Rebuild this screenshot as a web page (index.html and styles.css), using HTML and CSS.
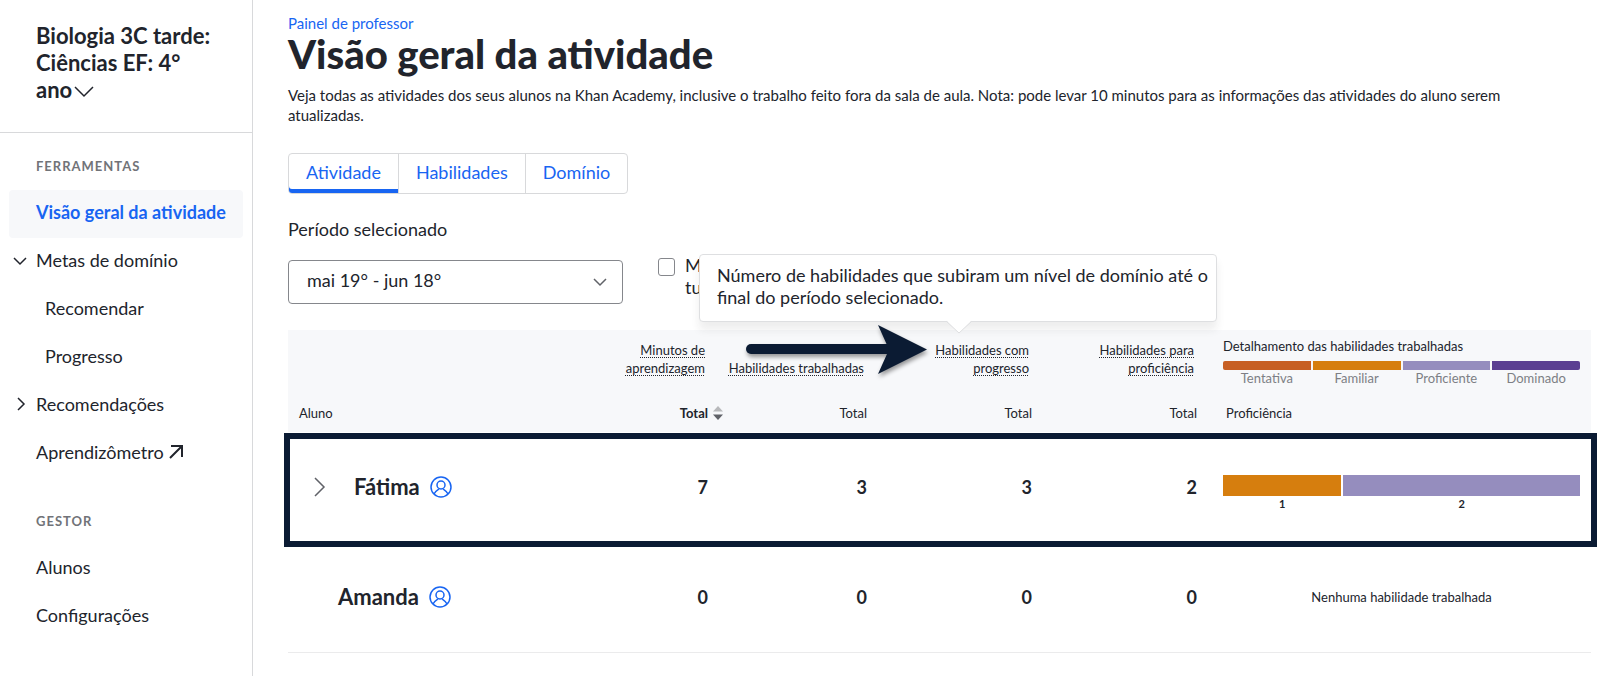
FILE: index.html
```
<!DOCTYPE html>
<html lang="pt-BR">
<head>
    <meta charset="UTF-8">
    <meta name="viewport" content="width=device-width, initial-scale=1.0">
    <title>Visão geral da atividade</title>
    <link rel="stylesheet" href="styles.css">
</head>
<body>
    <div class="layout">
        <!-- Sidebar -->
        <aside class="sidebar">
            <div class="class-header">
                <button class="class-switcher" type="button">Biologia 3C tarde: Ciências EF: 4° ano
                    <svg class="class-chevron" width="20" height="12" viewBox="0 0 20 12" aria-hidden="true"><path d="M1 1l9 9 9-9"/></svg>
                </button>
            </div>
            <nav class="nav">
                <h2 class="nav-title">Ferramentas</h2>
                <ul class="nav-list">
                    <li><a class="nav-link active" href="#">Visão geral da atividade</a></li>
                    <li>
                        <a class="nav-link" href="#">
                            <svg class="nav-chevron" width="14" height="14" viewBox="0 0 14 14" aria-hidden="true"><path d="M1 5l6 6 6-6"/></svg>
                            Metas de domínio
                        </a>
                    </li>
                    <li><a class="nav-link sub" href="#">Recomendar</a></li>
                    <li><a class="nav-link sub" href="#">Progresso</a></li>
                    <li>
                        <a class="nav-link" href="#">
                            <svg class="nav-chevron" width="14" height="14" viewBox="0 0 14 14" aria-hidden="true"><path d="M5 1l6 6-6 6"/></svg>
                            Recomendações
                        </a>
                    </li>
                    <li>
                        <a class="nav-link" href="#">Aprendizômetro
                            <svg class="nav-external" width="14" height="14" viewBox="0 0 14 14" aria-hidden="true"><path d="M2 1h11v11M13 1L1 13"/></svg>
                        </a>
                    </li>
                </ul>
                <h2 class="nav-title">Gestor</h2>
                <ul class="nav-list">
                    <li><a class="nav-link" href="#">Alunos</a></li>
                    <li><a class="nav-link" href="#">Configurações</a></li>
                </ul>
            </nav>
        </aside>

        <!-- Activity overview -->
        <main class="content">
            <a class="breadcrumb" href="#">Painel de professor</a>
            <h1>Visão geral da atividade</h1>
            <p class="description">Veja todas as atividades dos seus alunos na Khan Academy, inclusive o trabalho feito fora da sala de aula. Nota: pode levar 10 minutos para as informações das atividades do aluno serem atualizadas.</p>

            <div class="tabs">
                <button class="tab selected" type="button">Atividade</button>
                <button class="tab" type="button">Habilidades</button>
                <button class="tab" type="button">Domínio</button>
            </div>

            <label class="period-label" for="period">Período selecionado</label>
            <div class="filters">
                <div class="select-wrap">
                    <select id="period" class="period-select">
                        <option>mai 19° - jun 18°</option>
                    </select>
                    <svg class="select-chevron" width="14" height="9" viewBox="0 0 14 9" aria-hidden="true"><path d="M1 1l6 6 6-6"/></svg>
                </div>
                <div class="check">
                    <input type="checkbox" id="only-class">
                    <label for="only-class">Mostrar apenas atividades da turma</label>
                </div>
            </div>

            <table class="report">
                <colgroup>
                    <col>
                    <col class="col-minutes">
                    <col class="col-worked">
                    <col class="col-skills">
                    <col class="col-skills">
                    <col class="col-detail">
                </colgroup>
                <thead>
                    <tr class="group-row">
                        <td></td>
                        <th scope="col"><span class="term">Minutos de aprendizagem</span></th>
                        <th scope="col"><span class="term">Habilidades trabalhadas</span></th>
                        <th scope="col" class="has-tooltip">
                            <span class="term">Habilidades com progresso</span>
                            <div class="tooltip" role="tooltip">
                                Número de habilidades que subiram um nível de domínio até o final do período selecionado.
                                <svg class="tooltip-tail" width="26" height="14" viewBox="0 0 26 14" aria-hidden="true"><path class="tail-fill" d="M0 0h26L13 13z"/><path class="tail-line" d="M0 1l13 12L26 1"/></svg>
                            </div>
                            <svg class="pointer-arrow" width="190" height="60" viewBox="0 0 190 60" aria-hidden="true">
                                <path class="pointer-shaft" d="M10 29H150"/>
                                <path class="pointer-head" d="M137 5l49 24.500L137 54l11-24.500z"/>
                            </svg>
                        </th>
                        <th scope="col"><span class="term">Habilidades para proficiência</span></th>
                        <th scope="col" class="detail">
                            <div class="legend-title">Detalhamento das habilidades trabalhadas</div>
                            <ul class="legend">
                                <li class="attempted">Tentativa</li>
                                <li class="familiar">Familiar</li>
                                <li class="proficient">Proficiente</li>
                                <li class="mastered">Dominado</li>
                            </ul>
                        </th>
                    </tr>
                    <tr class="sort-row">
                        <th scope="col" class="student-col"><button type="button">Aluno</button></th>
                        <th scope="col">
                            <button class="sorted" type="button">Total
                                <svg width="10" height="14" viewBox="0 0 10 14" aria-hidden="true"><path class="sort-up" d="M0 5.500L5 0l5 5.500z"/><path class="sort-down" d="M0 8.500h10L5 14z"/></svg>
                            </button>
                        </th>
                        <th scope="col"><button type="button">Total</button></th>
                        <th scope="col"><button type="button">Total</button></th>
                        <th scope="col"><button type="button">Total</button></th>
                        <th scope="col" class="detail"><button class="proficiency" type="button">Proficiência</button></th>
                    </tr>
                </thead>
                <tbody>
                    <tr class="highlighted">
                        <th scope="row">
                            <div class="student expandable">
                                <button class="expand" type="button" aria-label="Expandir">
                                    <svg width="12" height="20" viewBox="0 0 12 20" aria-hidden="true"><path d="M1 1l9 9-9 9"/></svg>
                                </button>
                                <span>Fátima</span>
                                <svg class="avatar" width="22" height="22" viewBox="0 0 22 22" aria-hidden="true"><circle cx="11" cy="11" r="10"/><circle cx="11" cy="9" r="4"/><path d="M4 18c1.500-3 3.500-4 5-5M18 18c-1.500-3-3.500-4-5-5"/></svg>
                            </div>
                        </th>
                        <td>7</td>
                        <td>3</td>
                        <td>3</td>
                        <td>2</td>
                        <td class="detail">
                            <div class="bars">
                                <div class="bar familiar" style="flex-grow: 1">1</div>
                                <div class="bar proficient" style="flex-grow: 2">2</div>
                            </div>
                        </td>
                    </tr>
                    <tr>
                        <th scope="row">
                            <div class="student">
                                <span>Amanda</span>
                                <svg class="avatar" width="22" height="22" viewBox="0 0 22 22" aria-hidden="true"><circle cx="11" cy="11" r="10"/><circle cx="11" cy="9" r="4"/><path d="M4 18c1.500-3 3.500-4 5-5M18 18c-1.500-3-3.500-4-5-5"/></svg>
                            </div>
                        </th>
                        <td>0</td>
                        <td>0</td>
                        <td>0</td>
                        <td>0</td>
                        <td class="detail empty">Nenhuma habilidade trabalhada</td>
                    </tr>
                </tbody>
            </table>
        </main>
    </div>
</body>
</html>
```
FILE: styles.css
```
* {
    box-sizing: border-box;
}

body {
    margin: 0;
    font-family: Lato, "Noto Sans", sans-serif;
    font-size: 18px;
    line-height: 22px;
    color: #21242c;
    background-color: #fff;
}

button, select, input {
    font: inherit;
    color: inherit;
}

button {
    padding: 0;
    border: none;
    background: none;
    cursor: pointer;
}

a {
    text-decoration: none;
}

ul {
    list-style: none;
    margin: 0;
    padding: 0;
}

svg path, svg circle {
    fill: none;
    stroke: currentColor;
}

.layout {
    display: flex;
    min-height: 100vh;
}

/* Sidebar */
.sidebar {
    flex: 0 0 253px;
    border-right: 1px solid #d8d9db;
}

.class-header {
    padding: 22px 36px 29px;
    border-bottom: 1px solid #d8d9db;
}

.class-switcher {
    display: block;
    font-size: 22px;
    font-weight: bold;
    line-height: 27px;
    text-align: left;
}

.class-chevron {
    margin-left: -4px;
    stroke-width: 1.5;
}

.nav {
    padding: 24px 9px;
}

.nav-title {
    margin: 0 0 15px;
    padding-left: 27px;
    font-size: 13px;
    line-height: 18px;
    letter-spacing: 1px;
    text-transform: uppercase;
    color: #717378;
}

.nav-list {
    margin-bottom: 34px;
}

.nav-link {
    display: flex;
    align-items: center;
    position: relative;
    height: 48px;
    padding: 0 0 4px 27px;
    border-radius: 4px;
    color: #21242c;
}

.nav-link.active {
    font-weight: bold;
    color: #1865f2;
    background-color: #f7f8fa;
}

.nav-link.sub {
    padding-left: 36px;
}

.nav-chevron {
    position: absolute;
    left: 4px;
    stroke-width: 1.5;
}

.nav-external {
    margin-left: 5px;
    stroke-width: 2;
}

/* Content */
.content {
    flex: 1;
    min-width: 0;
    padding: 13px 32px 22px 35px;
}

.breadcrumb {
    display: block;
    font-size: 15px;
    line-height: 20px;
    color: #1865f2;
}

h1 {
    margin: 0 0 10px;
    font-size: 40px;
    font-weight: 900;
    line-height: 42px;
}

.description {
    margin: 0 0 28px;
    padding-right: 32px;
    font-size: 15px;
    line-height: 20px;
}

.tabs {
    display: inline-flex;
    border: 1px solid #d8d9db;
    border-radius: 4px;
}

.tab {
    height: 39px;
    padding: 0 17px 3px;
    color: #1865f2;
}

.tab + .tab {
    border-left: 1px solid #d8d9db;
}

.tab.selected {
    box-shadow: inset 0 -4px #1865f2;
    border-bottom-left-radius: 3px;
}

.period-label {
    display: block;
    margin: 24px 0 20px;
}

.filters {
    display: flex;
    align-items: flex-start;
    gap: 35px;
    margin-bottom: 26px;
}

.select-wrap {
    position: relative;
    width: 335px;
}

.period-select {
    display: block;
    width: 100%;
    height: 44px;
    padding: 0 18px 4px;
    border: 1px solid #85878c;
    border-radius: 4px;
    background-color: #fff;
    appearance: none;
}

.select-chevron {
    position: absolute;
    top: 18px;
    right: 16px;
    color: #606268;
    stroke-width: 1.5;
    pointer-events: none;
}

.check {
    display: flex;
    gap: 10px;
    width: 300px;
    margin-top: -6px;
}

.check input {
    flex: none;
    width: 17px;
    height: 18px;
    margin: 4px 0;
    border: 1px solid #85878c;
    border-radius: 3px;
    appearance: none;
}

/* Report table */
.report {
    width: 100%;
    table-layout: fixed;
    border-collapse: collapse;
}

.col-minutes {
    width: 130px;
}

.col-worked {
    width: 159px;
}

.col-skills {
    width: 165px;
}

.col-detail {
    width: 382px;
}

.report th, .report td {
    padding: 0 12px 0 0;
    text-align: right;
}

.report thead {
    font-size: 13px;
    line-height: 18px;
    background-color: #f7f8fa;
}

.report thead th {
    font-weight: normal;
}

.report .group-row th {
    height: 58px;
    padding: 0 15px 11px 0;
    vertical-align: bottom;
}

.group-row .term {
    display: inline-block;
    text-decoration: underline dotted 1px;
    text-decoration-skip-ink: none;
    text-underline-offset: 2px;
}

.report th.detail, .report td.detail {
    padding: 0 11px 0 14px;
    text-align: left;
}

.report .group-row th.detail {
    padding: 7px 11px 0 14px;
    vertical-align: top;
}

.legend-title {
    margin-bottom: 6px;
}

.legend {
    display: flex;
    gap: 2px;
}

.legend li {
    flex: 1;
    font-size: 13px;
    line-height: 16px;
    text-align: center;
    color: #7d7f85;
}

.legend li::before, .bar::before {
    content: "";
    display: block;
    height: 9px;
    background-color: var(--level);
}

.legend li:first-child::before {
    border-radius: 2px 0 0 2px;
}

.legend li:last-child::before {
    border-radius: 0 2px 2px 0;
}

.attempted {
    --level: #c75f23;
}

.familiar {
    --level: #d67e0e;
}

.proficient {
    --level: #958dbe;
}

.mastered {
    --level: #5b3f92;
}

.report .sort-row th {
    height: 44px;
    padding-top: 6px;
}

.sort-row .sorted {
    display: inline-flex;
    align-items: center;
    gap: 5px;
    margin-right: -15px;
    font-weight: bold;
}

.sort-row svg path {
    stroke: none;
}

.sort-row .sort-up {
    fill: #b8b9bb;
}

.sort-row .sort-down {
    fill: #606268;
}

.report .student-col {
    padding-left: 11px;
    text-align: left;
}

.proficiency {
    padding-left: 3px;
}

.report tbody tr {
    position: relative;
    height: 110px;
    border-bottom: 1px solid #ebebec;
}

.report tbody td {
    font-weight: bold;
}

/* frame drawn around the whole row, anchored to the tr */
.highlighted th::after {
    content: "";
    position: absolute;
    inset: 1px -6px -6px -4px;
    border: 6px solid #0b1b33;
    pointer-events: none;
}

.student {
    display: flex;
    align-items: center;
    gap: 10px;
    padding-left: 50px;
    font-size: 22px;
    line-height: 28px;
}

.student.expandable {
    padding-left: 26px;
}

.expand {
    display: flex;
    margin-right: 18px;
    color: #606268;
}

.expand path {
    stroke-width: 1.5;
}

.avatar {
    flex: none;
    color: #1865f2;
}

.avatar path, .avatar circle {
    stroke-width: 1.5;
}

.bars {
    display: flex;
    gap: 2px;
    padding-top: 14px;
}

.bar {
    flex-basis: 0;
    font-size: 11px;
    line-height: 16px;
    text-align: center;
}

.bar::before {
    height: 21px;
}

.report td.empty {
    font-size: 13px;
    font-weight: normal;
    text-align: center;
}

/* Column help */
.has-tooltip {
    position: relative;
}

.tooltip {
    position: absolute;
    bottom: calc(100% + 8px);
    left: -180px;
    z-index: 1;
    width: 518px;
    padding: 9px 4px 13px 17px;
    border: 1px solid #dedfe1;
    border-radius: 4px;
    background-color: #fff;
    box-shadow: 0 8px 8px rgba(33, 36, 44, 0.08);
    font-size: 18px;
    line-height: 22px;
    text-align: left;
}

.tooltip-tail {
    position: absolute;
    top: calc(100% - 1px);
    left: 246px;
}

.tooltip-tail .tail-fill {
    fill: #fff;
    stroke: none;
}

.tooltip-tail .tail-line {
    stroke: #dedfe1;
}

.pointer-arrow {
    position: absolute;
    top: -10px;
    left: -138px;
    z-index: 2;
    color: #0b1b33;
    filter: drop-shadow(1px 3px 2px rgba(0, 0, 0, 0.4));
}

.pointer-shaft {
    stroke-width: 10;
    stroke-linecap: round;
}

.pointer-arrow .pointer-head {
    fill: currentColor;
    stroke: none;
}
```
